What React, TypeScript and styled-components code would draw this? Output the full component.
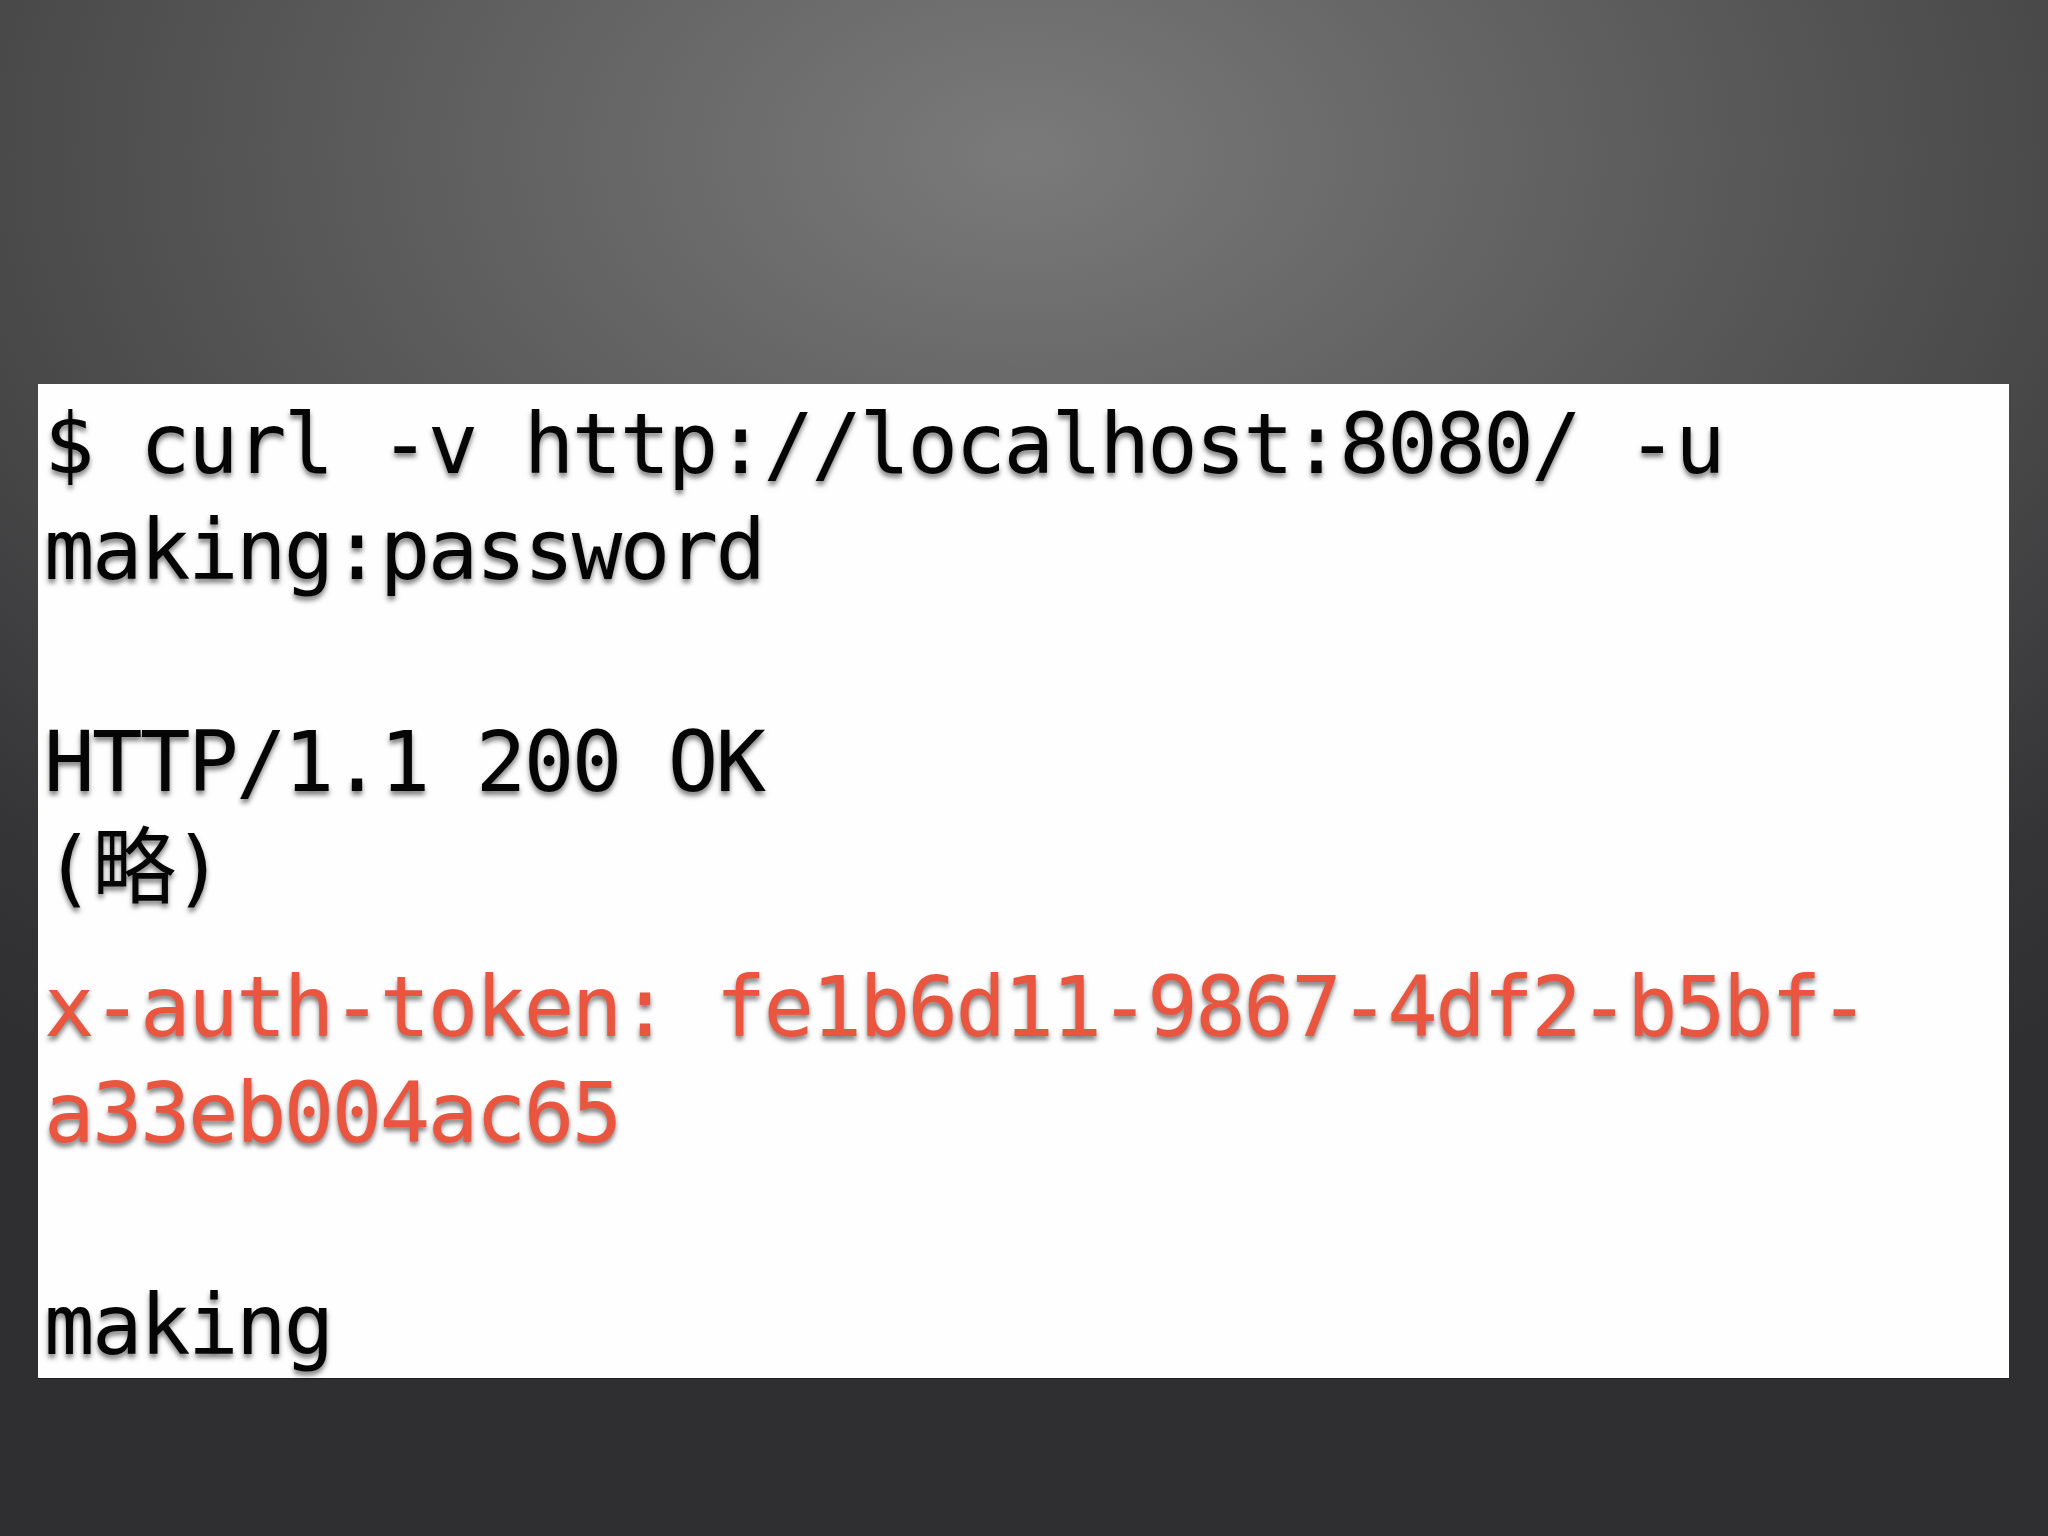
import React from "react";
import styled, { createGlobalStyle } from "styled-components";

const GlobalStyle = createGlobalStyle`
  html, body {
    margin: 0;
    padding: 0;
    width: 2048px;
    height: 1536px;
    overflow: hidden;
  }
  body {
    background: #2f2e30;
  }
`;

const Slide = styled.main`
  box-sizing: border-box;
  width: 2048px;
  height: 1536px;
  padding: 384px 39px 0 38px;
  background:
    radial-gradient(ellipse 1700px 1100px at 50% 10%, #7a7a7a 0%, #626262 30%, #4a4a4b 60%, #353436 85%, #2f2e30 100%);
  display: flex;
  flex-direction: column;
`;

const Terminal = styled.section`
  box-sizing: border-box;
  width: 1971px;
  height: 994px;
  background: #fefefe;
  padding: 7px 0 0 6px;
  display: flex;
  flex-direction: column;
  font-family: "DejaVu Sans Mono", "Noto Sans CJK JP", monospace;
  font-size: 84px;
  letter-spacing: -2.6px;
  line-height: 106px;
  box-shadow: 0 1px 0 rgba(0, 0, 0, 0.35);
`;

const Block = styled.div<{ $accent?: boolean; $gap?: number }>`
  display: flex;
  flex-direction: column;
  margin-top: ${(p) => p.$gap ?? 0}px;
  color: ${(p) => (p.$accent ? "#e9553f" : "#050505")};
  text-shadow: 0 4px 5px rgba(0, 0, 0, 0.5);
`;

const Line = styled.div`
  height: 106px;
  white-space: pre;
`;

export default function App() {
  return (
    <>
      <GlobalStyle />
      <Slide>
        <Terminal>
          <Block>
            <Line>$ curl -v http://localhost:8080/ -u</Line>
            <Line>making:password</Line>
            <Line> </Line>
            <Line>HTTP/1.1 200 OK</Line>
            <Line>(略)</Line>
          </Block>
          <Block $accent $gap={33}>
            <Line>x-auth-token: fe1b6d11-9867-4df2-b5bf-</Line>
            <Line>a33eb004ac65</Line>
          </Block>
          <Block>
            <Line> </Line>
            <Line>making</Line>
          </Block>
        </Terminal>
      </Slide>
    </>
  );
}
